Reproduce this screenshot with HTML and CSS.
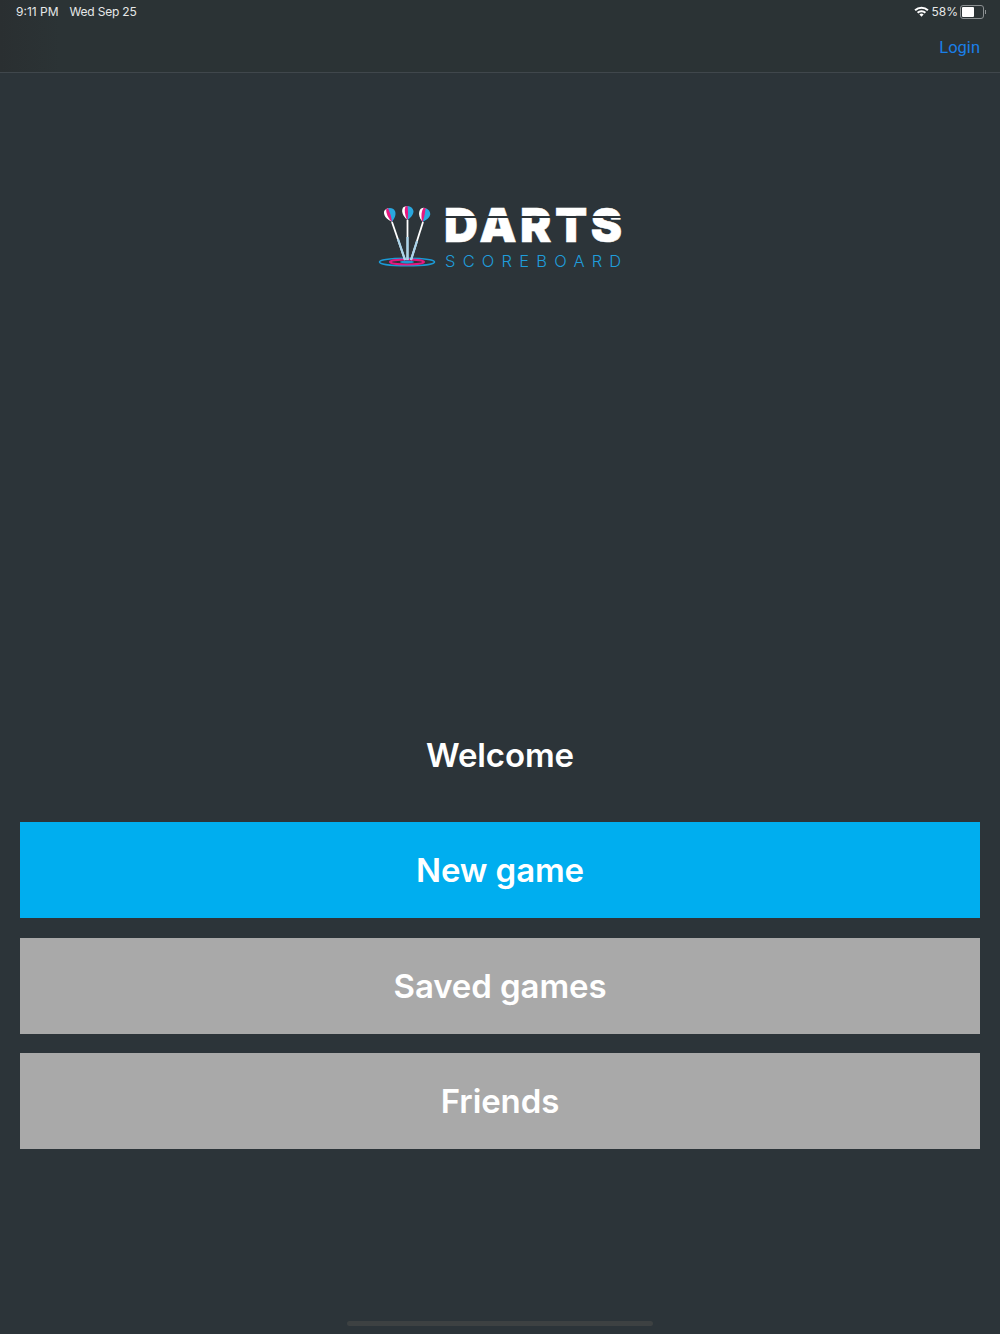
FILE: index.html
```html
<!DOCTYPE html>
<html lang="en">
<head>
 <meta charset="UTF-8">
 <meta name="viewport" content="width=device-width, initial-scale=1.0">
 <title>Darts Scoreboard</title>
 <link rel="stylesheet" href="styles.css">
</head>
<body>
 <header class="top-bar">
 <div class="status-bar">
 <div class="status-left">
 <span>9:11 PM</span>
 <span class="status-date">Wed Sep 25</span>
 </div>
 <div class="status-right">
 <svg class="wifi" width="15" height="11" viewBox="0 0 15 11">
 <path d="M0.4 3.6 A10.2 10.2 0 0 1 14.6 3.6 L13.2 5.1 A8.2 8.2 0 0 0 1.8 5.1 Z" fill="#fff"/>
 <path d="M2.9 6.1 A6.6 6.6 0 0 1 12.1 6.1 L10.7 7.5 A4.6 4.6 0 0 0 4.3 7.5 Z" fill="#fff"/>
 <path d="M5.4 8.5 A3 3 0 0 1 9.6 8.5 L7.5 10.8 Z" fill="#fff"/>
 </svg>
 <span>58%</span>
 <div class="battery"><div class="battery-level" style="width: 58%"></div></div>
 <div class="battery-cap"></div>
 </div>
 </div>
 <nav class="nav-bar">
 <a class="login" href="#">Login</a>
 </nav>
 </header>

 <main class="content">
 <div class="logo">
 <svg class="logo-darts" width="58" height="64" viewBox="0 0 58 64">
 <defs>
 <g id="flight">
 <path d="M0 14 C-5 10 -6.5 5 -4.5 1.5 Q-2 -0.5 0 0 L0.5 14 Z" fill="#fff"/>
 <path d="M-1 12.8 C-2.5 9 -3.5 4 -2 0.3 Q-0.5 -0.2 1 0 L1.5 7 L0.5 14 Z" fill="#e6187f"/>
 <path d="M0 14 C1 9 0.5 4 0 0 Q5 0.5 6 5 C6 9 3 12 0 14 Z" fill="#29a8e0"/>
 </g>
 </defs>
 <ellipse cx="29" cy="57" rx="27.5" ry="3.8" fill="none" stroke="#1b9ad6" stroke-width="1.6"/>
 <ellipse cx="29" cy="57" rx="17" ry="2.4" fill="none" stroke="#e6187f" stroke-width="2"/>
 <ellipse cx="29" cy="57" rx="7" ry="1.4" fill="#1b9ad6"/>
 <path d="M14 17 L27 55" stroke="#fff" stroke-width="1.8"/>
 <path d="M29.5 15 L29.5 55" stroke="#fff" stroke-width="1.8"/>
 <path d="M45 17 L33 55" stroke="#fff" stroke-width="1.8"/>
 <path d="M20 34 L27 55 M29.5 32 L29.5 55 M39 36 L33 55" stroke="#a9d3ea" stroke-width="2.2"/>
 <use href="#flight" transform="translate(12 3) rotate(-16 0 7)"/>
 <use href="#flight" transform="translate(29.5 1)"/>
 <use href="#flight" transform="translate(46 3) rotate(12 0 7)"/>
 </svg>
 <div class="logo-text">
 <div class="logo-title">DARTS</div>
 <div class="logo-sub">SCOREBOARD</div>
 </div>
 </div>

 <h1 class="welcome">Welcome</h1>

 <div class="buttons">
 <a class="btn btn-primary" href="#">New game</a>
 <a class="btn" href="#">Saved games</a>
 <a class="btn" href="#">Friends</a>
 </div>
 </main>

 <div class="home-bar"></div>
</body>
</html>
```

FILE: styles.css
```css
html, body {
margin: 0;
height: 100%;
}
body {
font-family: 'Inter', 'Liberation Sans', sans-serif;
background-color: #2c3439;
color: #fff;
display: flex;
flex-direction: column;
min-height: 1334px;
box-sizing: border-box;
overflow: hidden;
}
a {
text-decoration: none;
}
.top-bar {
height: 72px;
background: linear-gradient(to right, #2a2f31, #2b3335 6%);
border-bottom: 1px solid #40474c;
flex-shrink: 0;
}
.status-bar {
display: flex;
justify-content: space-between;
align-items: center;
height: 23px;
padding: 0 14px 0 16px;
font-size: 12px;
color: #e6e8e8;
}
.status-left {
display: flex;
gap: 11px;
}
.status-date {
letter-spacing: -0.2px;
}
.status-right {
display: flex;
align-items: center;
}
.wifi {
margin-right: 2px;
}
.battery {
width: 20px;
height: 10px;
margin-left: 2px;
padding: 1px;
border: 1px solid #8b9092;
border-radius: 3px;
}
.battery-level {
height: 100%;
background-color: #fff;
border-radius: 1px;
}
.battery-cap {
width: 1px;
height: 4px;
margin-left: 1px;
background-color: #8b9092;
}
.nav-bar {
display: flex;
justify-content: flex-end;
align-items: center;
height: 49px;
padding-right: 20px;
}
.login {
font-family: 'Roboto', sans-serif;
color: #1a7fe8;
font-size: 16.5px;
}
.content {
flex: 1;
display: flex;
flex-direction: column;
padding: 0 20px;
}
.logo {
display: flex;
justify-content: center;
align-items: flex-start;
gap: 6px;
margin-top: 132px;
}
.logo-text {
width: 180px;
padding-top: 2px;
white-space: nowrap;
}
.logo-title {
position: relative;
padding-left: 2px;
font-weight: 900;
font-size: 47px;
line-height: 36px;
letter-spacing: 3.5px;
-webkit-text-stroke: 0.5px #fff;
}
/* stencil cut through the wordmark */
.logo-title::after {
content: "";
position: absolute;
left: 0;
right: 0;
top: 9px;
height: 1.5px;
background-color: #2c3439;
}
.logo-sub {
margin-top: 9px;
padding-left: 3px;
font-size: 16.5px;
line-height: 18px;
letter-spacing: 7.2px;
color: #1f9ddb;
font-weight: 300;
}
.welcome {
margin: 465px 0 0;
height: 41px;
font-size: 33px;
line-height: 41px;
font-weight: 600;
letter-spacing: -0.1px;
text-align: center;
}
.buttons {
display: flex;
flex-direction: column;
gap: 19.5px;
margin-top: 46px;
}
.btn {
display: flex;
justify-content: center;
align-items: center;
height: 96px;
background-color: #a9a9a9;
color: #fff;
font-size: 33px;
font-weight: 600;
letter-spacing: -0.1px;
}
.btn-primary {
background-color: #00aeef;
}
.home-bar {
position: absolute;
left: 347px;
bottom: 8px;
width: 306px;
height: 5px;
border-radius: 3px;
background-color: #3d4142;
}
```
